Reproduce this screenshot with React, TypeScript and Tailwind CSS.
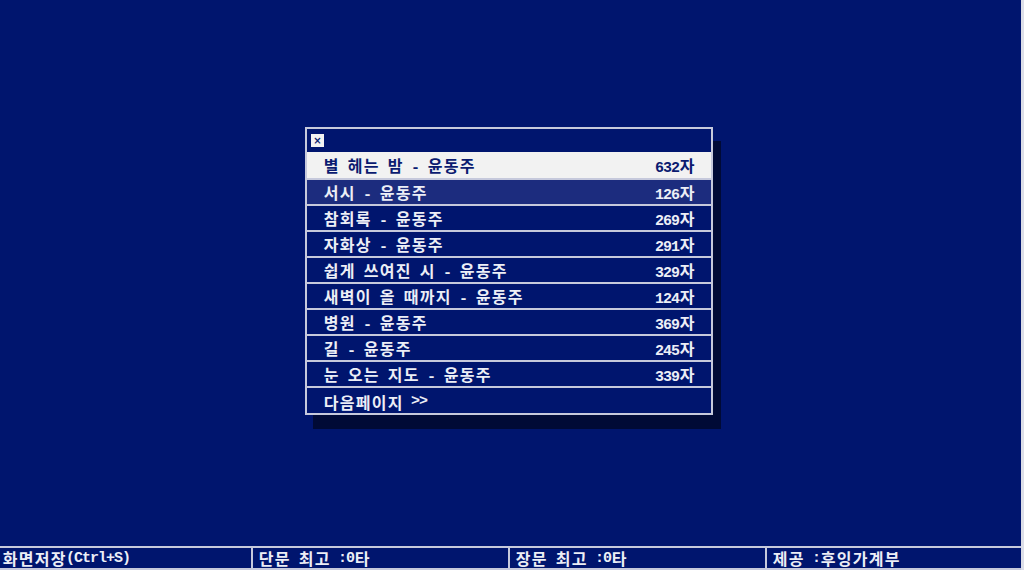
import React from "react";

function T({ text }: { text: string }) {
  const chars = Array.from(text);
  return (
    <>
      {chars.map((c, i) =>
        c.charCodeAt(0) < 128 ? (
          <span
            key={i}
            className="inline-block w-[8px] text-center font-['Liberation_Mono',monospace] text-[15px] font-bold whitespace-pre"
          >
            {c}
          </span>
        ) : (
          <span
            key={i}
            className="inline-block w-[16px] text-center font-['Noto_Sans_CJK_KR',sans-serif] text-[16px] font-bold whitespace-pre"
          >
            {c}
          </span>
        )
      )}
    </>
  );
}

const rows = [
  { t: "별 헤는 밤 - 윤동주", n: "632자" },
  { t: "서시 - 윤동주", n: "126자" },
  { t: "참회록 - 윤동주", n: "269자" },
  { t: "자화상 - 윤동주", n: "291자" },
  { t: "쉽게 쓰여진 시 - 윤동주", n: "329자" },
  { t: "새벽이 올 때까지 - 윤동주", n: "124자" },
  { t: "병원 - 윤동주", n: "369자" },
  { t: "길 - 윤동주", n: "245자" },
  { t: "눈 오는 지도 - 윤동주", n: "339자" },
];

export default function App() {
  return (
    <div className="w-[1024px] h-[570px] flex bg-[#00156e] overflow-hidden">
      <div className="w-[1021px] h-[570px] flex flex-col">
        <div className="h-[546px] pt-[127px] pl-[305px]">
          <div className="w-[408px] border-2 border-[#c6c9dc] bg-[#00156e] shadow-[8px_14px_0_#000a36] flex flex-col">
            <div className="h-[23px] flex items-center pl-[4px]">
              <div className="w-[13px] h-[13px] bg-[#f2f2f2] flex items-center justify-center text-[#0a1a6e] text-[10px] leading-none font-['DejaVu_Sans',sans-serif] font-bold">
                ×
              </div>
            </div>
            {rows.map((r, i) => (
              <div
                key={i}
                className={
                  "border-b-2 border-[#c6c9dc] flex items-center justify-between pt-[2px] pl-[16px] pr-[16px] leading-none " +
                  (i === 0
                    ? "h-[28px] bg-[#f2f2f2] text-[#0b1b70]"
                    : i === 1
                    ? "h-[26px] bg-[#1c2c7e] text-[#eceef6]"
                    : "h-[26px] text-[#eceef6]")
                }
              >
                <span>
                  <T text={r.t} />
                </span>
                <span>
                  <T text={r.n} />
                </span>
              </div>
            ))}
            <div className="h-[25px] flex items-center pt-[2px] pl-[16px] text-[#eceef6] leading-none">
              <T text="다음페이지 >>" />
            </div>
          </div>
        </div>
        <div className="h-[24px] border-t-2 border-b-2 border-[#c6c9dc] flex text-[#eceef6] leading-none">
          <div className="w-[251px] flex items-center pl-[2px]">
            <T text="화면저장(Ctrl+S)" />
          </div>
          <div className="w-[257px] border-l-2 border-[#c6c9dc] flex items-center pl-[5px]">
            <T text="단문 최고 :0타" />
          </div>
          <div className="w-[257px] border-l-2 border-[#c6c9dc] flex items-center pl-[5px]">
            <T text="장문 최고 :0타" />
          </div>
          <div className="flex-1 border-l-2 border-[#c6c9dc] flex items-center pl-[5px]">
            <T text="제공 :후잉가계부" />
          </div>
        </div>
      </div>
      <div className="w-[3px] h-[570px] bg-[#dcdee8]" />
    </div>
  );
}
